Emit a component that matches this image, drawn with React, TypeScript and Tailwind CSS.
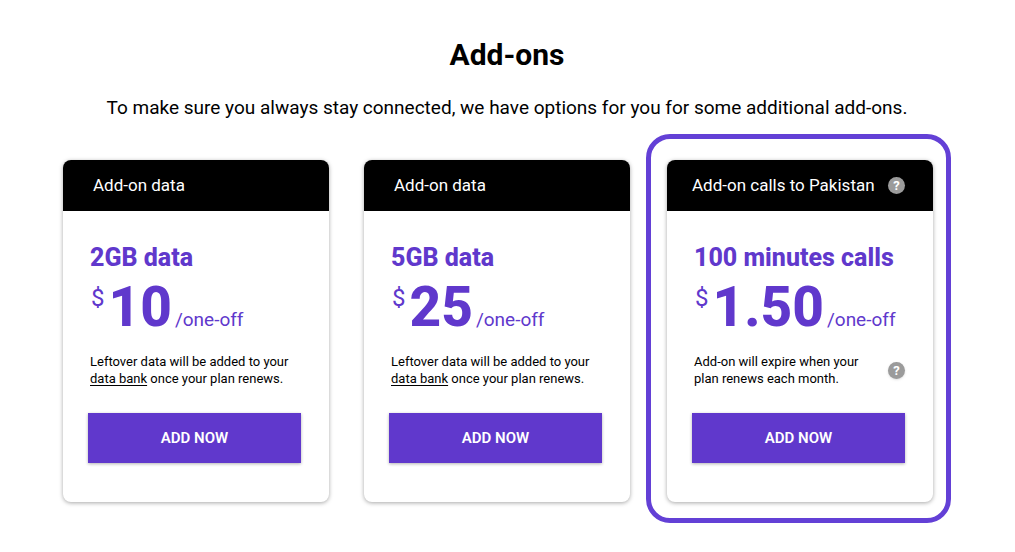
import type { ReactNode } from "react";

type AddOn = {
  category: string;
  title: string;
  price: string;
  description: ReactNode;
  hasHelp?: boolean;
};

const dataBankNote = (
  <>
    Leftover data will be added to your{" "}
    <a href="#data-bank" className="underline underline-offset-2">
      data bank
    </a>{" "}
    once your plan renews.
  </>
);

const dataAddOns: AddOn[] = [
  {
    category: "Add-on data",
    title: "2GB data",
    price: "10",
    description: dataBankNote,
  },
  {
    category: "Add-on data",
    title: "5GB data",
    price: "25",
    description: dataBankNote,
  },
];

const callsAddOn: AddOn = {
  category: "Add-on calls to Pakistan",
  title: "100 minutes calls",
  price: "1.50",
  description: "Add-on will expire when your plan renews each month.",
  hasHelp: true,
};

const HelpButton = ({ label }: { label: string }) => (
  <button
    type="button"
    aria-label={label}
    className="flex h-[17px] w-[17px] shrink-0 items-center justify-center rounded-full bg-[#9b9b9b] text-[13px] font-bold leading-none text-white shadow-sm"
  >
    ?
  </button>
);

const AddOnCard = ({ category, title, price, description, hasHelp }: AddOn) => (
  <article className="min-w-0 flex-1 overflow-hidden rounded-lg bg-white shadow-[0_1px_4px_rgba(0,0,0,0.35)]">
    <header
      className={`flex h-[51px] items-center justify-between bg-black pr-7 text-[17px] text-white ${
        hasHelp ? "pl-[25px]" : "pl-[30px]"
      }`}
    >
      <span className="whitespace-nowrap">{category}</span>
      {hasHelp && <HelpButton label="About calls to Pakistan" />}
    </header>
    <div className="pt-[31px] pl-[27px] text-[#6038cc]">
      <h2 className="whitespace-nowrap text-[25px] font-extrabold leading-8">
        {title}
      </h2>
      <p className="flex h-[60px] items-baseline whitespace-nowrap">
        <span className="self-start pt-1 pl-px text-2xl leading-10">$</span>
        <span className="ml-1 text-[55px] font-extrabold leading-[66px]">
          {price}
        </span>
        <span className="ml-[3px] text-[19px] leading-8">/one-off</span>
      </p>
    </div>
    <div className="mt-[19px] flex h-[34px] items-center justify-between pr-7 pl-[27px]">
      <p
        className={`text-[13px] leading-[17px] text-black ${
          hasHelp ? "max-w-[180px]" : ""
        }`}
      >
        {description}
      </p>
      {hasHelp && <HelpButton label="About add-on expiry" />}
    </div>
    <div className="pt-[26px] pr-7 pb-[39px] pl-[25px]">
      <button
        type="button"
        className="h-[50px] w-full bg-[#6038cc] text-[15px] font-semibold text-white shadow-[0_1px_3px_rgba(0,0,0,0.3)]"
      >
        ADD NOW
      </button>
    </div>
  </article>
);

const App = () => {
  return (
    <main className="bg-white pt-[37px] pr-16 pb-7 pl-[63px] font-['Roboto',sans-serif] text-black">
      <h1 className="text-center text-[30px] font-bold leading-9">Add-ons</h1>
      <p className="mt-[19px] text-center text-[19px] leading-8">
        To make sure you always stay connected, we have options for you for some
        additional add-ons.
      </p>
      <section className="mt-[10px] grid grid-cols-[567fr_305fr] items-start gap-4">
        <div className="flex min-w-0 gap-[35px] pt-[26px]">
          {dataAddOns.map((addOn) => (
            <AddOnCard key={addOn.title} {...addOn} />
          ))}
        </div>
        <div className="flex min-w-0 rounded-3xl border-5 border-[#6340d6] pt-[21px] pr-[13px] pb-4 pl-4">
          <AddOnCard {...callsAddOn} />
        </div>
      </section>
    </main>
  );
};

export default App;
